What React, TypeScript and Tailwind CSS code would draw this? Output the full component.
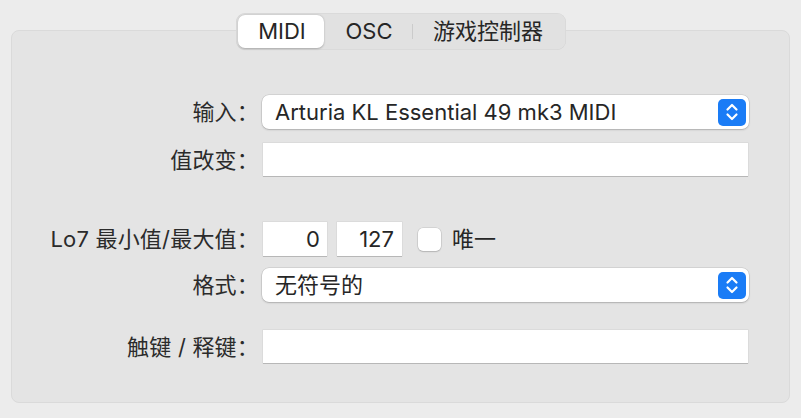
import React from "react";

const font = "font-['Inter','Noto_Sans_CJK_SC',sans-serif]";

function Stepper() {
  return (
    <div className="ml-auto w-[28px] h-[27px] rounded-[5px] bg-[#1a7cf6] flex items-center justify-center">
      <svg width="14" height="20" viewBox="0 0 14 20" fill="none" stroke="white" strokeWidth={2.2} strokeLinecap="round" strokeLinejoin="round">
        <path d="M2.5 7.5 7 3l4.5 4.5" />
        <path d="M2.5 12.5 7 17l4.5-4.5" />
      </svg>
    </div>
  );
}

function Popup({ value }: { value: string }) {
  return (
    <div className="w-[487px] h-[34px] bg-white rounded-[7px] shadow-[0_0_0_0.5px_rgba(0,0,0,0.14),0_1px_2px_rgba(0,0,0,0.18)] flex items-center pl-[13px] pr-[3px]">
      <span className="text-[22px] text-[#262626] leading-none">{value}</span>
      <Stepper />
    </div>
  );
}

function Field({ className = "", value }: { className?: string; value?: string }) {
  return (
    <div
      className={
        "h-[33px] bg-white shadow-[0_0_0_0.5px_rgba(0,0,0,0.08),0_1px_0_rgba(0,0,0,0.16)] flex items-center justify-end pr-[7px] text-[22px] text-[#262626] " +
        className
      }
    >
      {value}
    </div>
  );
}

function Row({ label, children, className = "" }: { label: string; children: React.ReactNode; className?: string }) {
  return (
    <div className={"flex items-center " + className}>
      <div className="w-[247px] text-right text-[22px] tracking-[0.2px] text-[#2b2b2b] leading-none">{label}</div>
      <div className="ml-[3px] flex items-center">{children}</div>
    </div>
  );
}

export default function App() {
  return (
    <div className={"w-[801px] h-[418px] bg-[#ececec] pt-[13px] px-[11px] " + font}>
      <div className="relative z-10 -mb-[20px] flex justify-center">
        <div className="h-[37px] w-[330px] rounded-[9px] bg-[#e1e1e1] shadow-[inset_0_0_0_0.5px_rgba(0,0,0,0.06)] flex items-center px-[2px] text-[22px] text-[#262626]">
          <div className="w-[86px] h-[33px] rounded-[7px] bg-white shadow-[0_0.5px_2px_rgba(0,0,0,0.25)] flex items-center justify-center pl-[3px]">
            MIDI
          </div>
          <div className="w-[88px] text-center pl-[3px]">OSC</div>
          <div className="w-px h-[15px] bg-[#cbcbcb]" />
          <div className="flex-1 text-center">游戏控制器</div>
        </div>
      </div>
      <div className="h-[373px] rounded-[8px] bg-[#e4e4e4] border border-[#dadada] pt-[64px]">
        <Row label="输入：">
          <Popup value="Arturia KL Essential 49 mk3 MIDI" />
        </Row>
        <Row label="值改变：" className="mt-[14px]">
          <Field className="w-[485px] ml-[1px]" />
        </Row>
        <Row label="Lo7 最小值/最大值：" className="mt-[46px]">
          <Field className="w-[64px] h-[34px] ml-[1px]" value="0" />
          <Field className="w-[65px] h-[34px] ml-[10px] pr-[8px]" value="127" />
          <div className="ml-[16px] w-[23px] h-[23px] rounded-[5px] bg-white shadow-[0_0_0_0.5px_rgba(0,0,0,0.14),0_1px_1.5px_rgba(0,0,0,0.15)]" />
          <span className="ml-[11px] text-[22px] text-[#262626]">唯一</span>
        </Row>
        <Row label="格式：" className="mt-[12px]">
          <Popup value="无符号的" />
        </Row>
        <Row label="触键 / 释键：" className="mt-[28px]">
          <Field className="w-[485px] ml-[1px]" />
        </Row>
      </div>
    </div>
  );
}
